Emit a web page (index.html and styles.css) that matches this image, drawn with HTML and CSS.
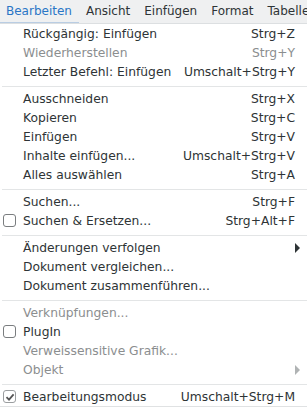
FILE: index.html
```html
<!DOCTYPE html>
<html>
	<head>
		<link rel="stylesheet" href="styles.css">
	</head>
	<body>
		<div class="menubar">
			<span class="top aktiv">Bearbeiten</span>
			<span class="top">Ansicht</span>
			<span class="top">Einfügen</span>
			<span class="top">Format</span>
			<span class="top">Tabelle</span>
		</div>
		<div class="menu">
			<div class="item"><span class="text">Rückgängig: Einfügen</span><span class="kurz">Strg+Z</span></div>
			<div class="item aus"><span class="text">Wiederherstellen</span><span class="kurz">Strg+Y</span></div>
			<div class="item"><span class="text">Letzter Befehl: Einfügen</span><span class="kurz">Umschalt+Strg+Y</span></div>
			<div class="sep"></div>
			<div class="item"><span class="text">Ausschneiden</span><span class="kurz">Strg+X</span></div>
			<div class="item"><span class="text">Kopieren</span><span class="kurz">Strg+C</span></div>
			<div class="item"><span class="text">Einfügen</span><span class="kurz">Strg+V</span></div>
			<div class="item"><span class="text">Inhalte einfügen...</span><span class="kurz">Umschalt+Strg+V</span></div>
			<div class="item"><span class="text">Alles auswählen</span><span class="kurz">Strg+A</span></div>
			<div class="sep"></div>
			<div class="item"><span class="text">Suchen...</span><span class="kurz">Strg+F</span></div>
			<div class="item"><span class="box"></span><span class="text">Suchen &amp; Ersetzen...</span><span class="kurz">Strg+Alt+F</span></div>
			<div class="sep"></div>
			<div class="item"><span class="text">Änderungen verfolgen</span><span class="pfeil"></span></div>
			<div class="item"><span class="text">Dokument vergleichen...</span></div>
			<div class="item"><span class="text">Dokument zusammenführen...</span></div>
			<div class="sep"></div>
			<div class="item aus"><span class="text">Verknüpfungen...</span></div>
			<div class="item"><span class="box"></span><span class="text">PlugIn</span></div>
			<div class="item aus"><span class="text">Verweissensitive Grafik...</span></div>
			<div class="item aus"><span class="text">Objekt</span><span class="pfeil"></span></div>
			<div class="sep"></div>
			<div class="item">
				<span class="box an">
					<svg width="10" height="10" viewBox="0 0 10 10"><path d="M1.5 5.2 L4 7.6 L8.6 2.4" fill="none" stroke="#555" stroke-width="1.8"/></svg>
				</span>
				<span class="text">Bearbeitungsmodus</span><span class="kurz">Umschalt+Strg+M</span>
			</div>
		</div>
		<div class="unten"></div>
	</body>
</html>
```
FILE: styles.css
```css
body{
	margin: 0;
	width: 307px;
	height: 411px;
	overflow: hidden;
	background: #ffffff;
	font-family: "DejaVu Sans", sans-serif;
	font-size: 12.3px;
	color: #2e3436;
}
.menubar{
	height: 23px;
	background-color: #eff0f1;
	border-bottom: 1px solid #dcdfe1;
	display: flex;
	align-items: center;
	white-space: nowrap;
	font-size: 12px;
}
.top{
	padding: 0 7px;
	height: 23px;
	line-height: 23px;
}
.top.aktiv{
	padding-left: 6px;
	color: #2a76c6;
	box-shadow: inset 0 -1px 0 #b9cde3;
}
.menu{
	display: flex;
	flex-direction: column;
}
.item{
	height: 19px;
	display: flex;
	align-items: center;
	padding-left: 23px;
	padding-right: 12px;
	position: relative;
	white-space: nowrap;
}
.item .text{
	flex: 1;
}
.aus{
	color: #8b8e8f;
}
.sep{
	height: 1px;
	background: #e3e5e6;
	margin: 5px 0 2px 2px;
}
.box{
	position: absolute;
	left: 3px;
	top: 3px;
	width: 11px;
	height: 11px;
	border: 1px solid #7a7d7f;
	border-radius: 3px;
	background: #fff;
}
.box.an{
	border-color: #9a9d9f;
}
.box svg{
	display: block;
	margin: 0.5px 0 0 0.5px;
}
.pfeil{
	width: 0;
	height: 0;
	border-top: 5px solid transparent;
	border-bottom: 5px solid transparent;
	border-left: 5px solid #2e3436;
	margin-right: -5px;
}
.aus .pfeil{
	border-left-color: #b0b3b4;
}
.unten{
	border-top: 1px solid #e0e2e3;
}
```
